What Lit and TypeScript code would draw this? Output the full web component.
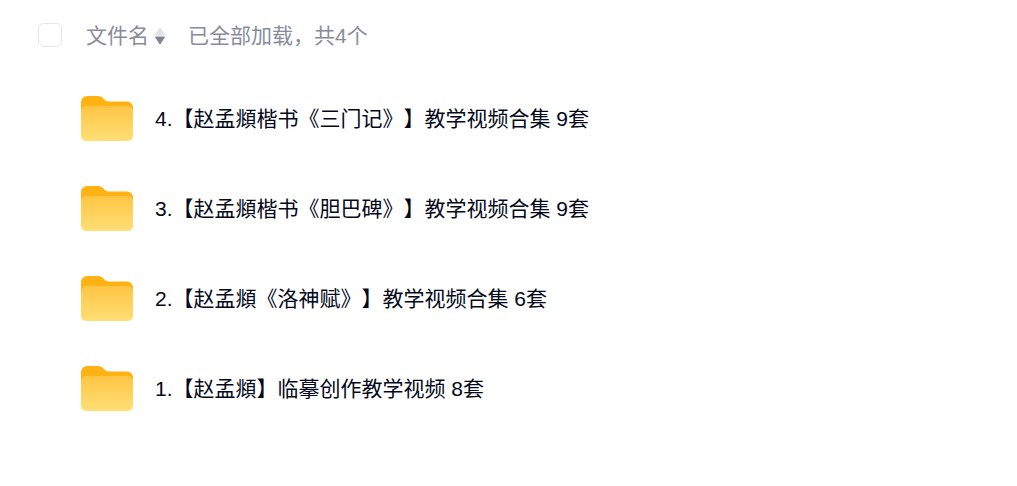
import { LitElement, html, css } from "lit";
import { customElement } from "lit/decorators.js";

const ITEMS = [
  "4.【赵孟頫楷书《三门记》】教学视频合集 9套",
  "3.【赵孟頫楷书《胆巴碑》】教学视频合集 9套",
  "2.【赵孟頫《洛神赋》】教学视频合集 6套",
  "1.【赵孟頫】临摹创作教学视频 8套",
];

@customElement("app-root")
export class AppRoot extends LitElement {
  static styles = css`
    :host {
      display: block;
      width: 1017px;
      height: 486px;
      background: #fff;
      overflow: hidden;
      font-family: "Liberation Sans", "Noto Sans CJK SC", sans-serif;
      font-size: 21px;
      font-feature-settings: "chws" 0;
      text-spacing-trim: space-all;
    }
    .header {
      display: flex;
      align-items: center;
      height: 24px;
      padding: 23px 0 0 38px;
      color: #878c9c;
    }
    .label {
      position: relative;
      top: -1px;
    }
    .check {
      width: 24px;
      height: 24px;
      box-sizing: border-box;
      border: 1.5px solid #e3e5ec;
      border-radius: 6px;
      margin-right: 24px;
    }
    .sort {
      display: block;
      margin: 2px 23px 0 6px;
    }
    .list {
      display: flex;
      flex-direction: column;
      gap: 30px;
      padding: 41px 0 0 81px;
    }
    .row {
      display: flex;
      align-items: center;
      height: 60px;
      gap: 22px;
      color: #03081a;
      white-space: nowrap;
    }
    .folder {
      display: block;
      flex: none;
      transform: translateY(1px);
    }
    .name {
      transform: translateY(-1px);
    }
  `;

  folder(i: number) {
    const g = `fg${i}`;
    return html`<svg class="folder" width="52" height="46" viewBox="0 0 52 46">
      <defs>
        <linearGradient id=${g} x1="0" y1="0" x2="0" y2="1">
          <stop offset="0" stop-color="#ffc544"></stop>
          <stop offset="1" stop-color="#ffdf75"></stop>
        </linearGradient>
      </defs>
      <path d="M0 6a6 6 0 0 1 6-6h11c2.600 0 4 1 5.500 2.600c1.500 1.700 3 3 5.500 3H46a6 6 0 0 1 6 6v12H0z" fill="#ffb211"></path>
      <path d="M0 15a5 5 0 0 1 5-5h42a5 5 0 0 1 5 5v25a5 5 0 0 1-5 5H5a5 5 0 0 1-5-5z" fill="url(#${g})"></path>
    </svg>`;
  }

  render() {
    return html`
      <div class="header">
        <div class="check"></div>
        <span class="label">文件名</span>
        <svg class="sort" width="10" height="18" viewBox="0 0 10 18">
          <path d="M5 1 9.500 8H.5z" fill="#dfe1e8" stroke="#dfe1e8" stroke-linejoin="round"></path>
          <path d="M.5 10h9L5 17z" fill="#7f8494" stroke="#7f8494" stroke-linejoin="round"></path>
        </svg>
        <span class="label">已全部加载，共4个</span>
      </div>
      <div class="list">
        ${ITEMS.map(
          (t, i) => html`<div class="row">${this.folder(i)}<span class="name">${t}</span></div>`
        )}
      </div>
    `;
  }
}
